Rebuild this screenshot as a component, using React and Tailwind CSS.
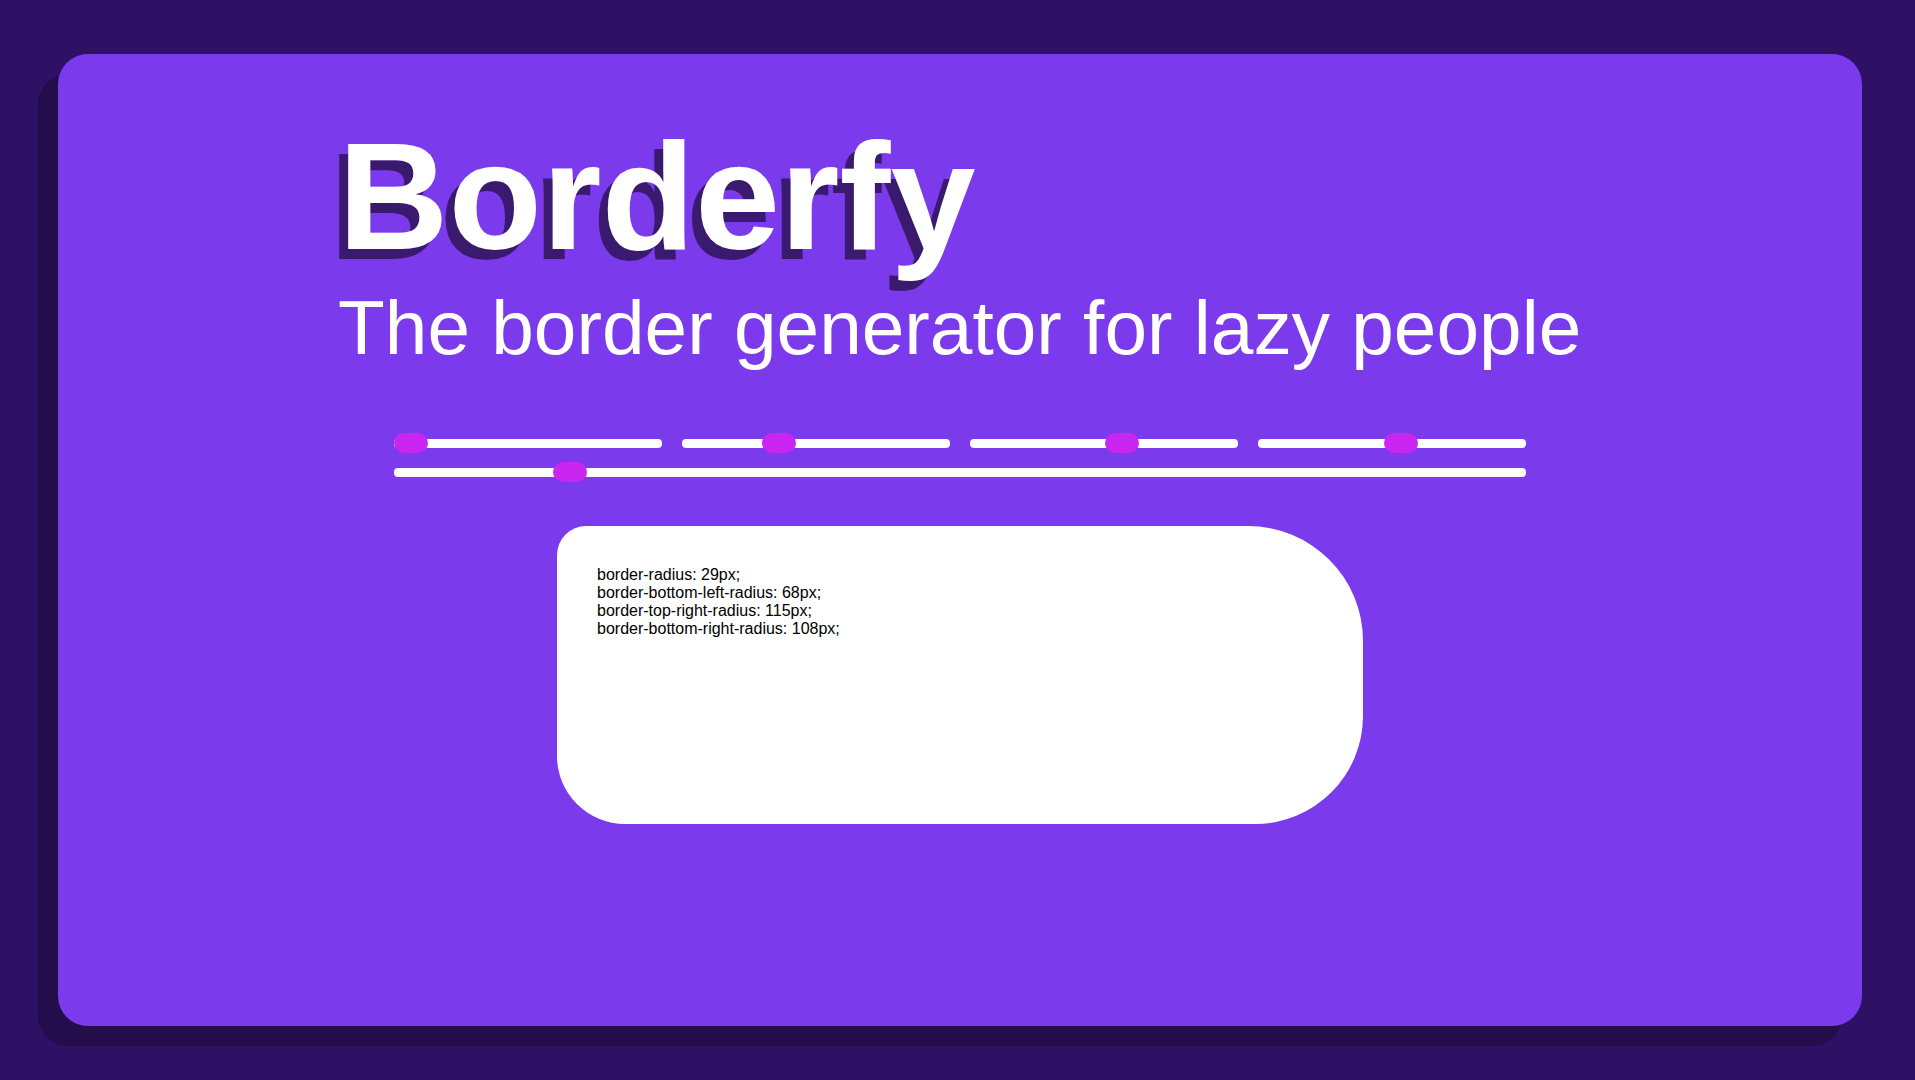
import React from 'react';

const MAX = 200;

const Slider = ({ value, className = '' }) => {
  const left = `calc((100% - 34px) * ${value / MAX})`;
  return (
    <div className={`relative h-[20px] flex items-center ${className}`}>
      <div className="h-[9px] w-full bg-white rounded-[4px]" />
      <div
        className="absolute top-0 h-[20px] w-[34px] rounded-[10px] bg-[#c926f2]"
        style={{ left }}
      />
    </div>
  );
};

const radii = { tl: 0, bl: 68, tr: 115, br: 108, all: 29 };

export default function App() {
  return (
    <div className="min-h-screen bg-[#2e1065] pt-[54px] pl-[58px] font-['Liberation_Sans',Arial,sans-serif]">
      <div className="w-[1804px] h-[972px] bg-[#7c3aed] rounded-[30px] shadow-[-20px_20px_0_#230d4a] pt-[54px] flex flex-col">
        <div className="pl-[280px] text-white">
          <h1 className="text-[153px] font-bold leading-[normal] [text-shadow:-9px_10px_0_#3a1a6e]">
            Borderfy
          </h1>
          <p className="text-[76.6px] leading-[normal]">The border generator for lazy people</p>
        </div>

        <div className="mx-auto w-[1132px] mt-[61px] flex flex-col gap-[9px]">
          <div className="flex gap-[20px]">
            <Slider value={radii.tl} className="w-[268px]" />
            <Slider value={radii.bl} className="w-[268px]" />
            <Slider value={radii.tr} className="w-[268px]" />
            <Slider value={radii.br} className="w-[268px]" />
          </div>
          <Slider value={radii.all} className="w-full" />
        </div>

        <div className="mx-auto mt-[44px] w-[806px] h-[298px] bg-white p-10 rounded-tl-[29px] rounded-bl-[68px] rounded-tr-[115px] rounded-br-[108px] text-black text-[16px] leading-[normal]">
          <div>border-radius: {radii.all}px;</div>
          <div>border-bottom-left-radius: {radii.bl}px;</div>
          <div>border-top-right-radius: {radii.tr}px;</div>
          <div>border-bottom-right-radius: {radii.br}px;</div>
        </div>
      </div>
    </div>
  );
}
